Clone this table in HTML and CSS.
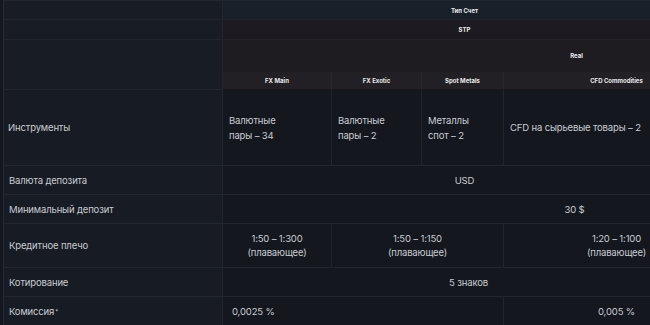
FILE: index.html
```html
<!DOCTYPE html>
<html lang="ru">
<head>
<meta charset="utf-8">
<link rel="stylesheet" href="styles.css">
</head>
<body>
<div class="table">
  <div class="cell head-left r1"></div>
  <div class="cell head-type span-all shift-l">Тип Счет</div>

  <div class="cell head-left r2"></div>
  <div class="cell head-stp span-all shift-l">STP</div>

  <div class="cell head-left r3"></div>
  <div class="cell head-real span-all shift-real">Real</div>

  <div class="cell sub c">FX Main</div>
  <div class="cell sub c">FX Exotic</div>
  <div class="cell sub c">Spot Metals</div>
  <div class="cell sub c last">CFD Commodities</div>

  <div class="cell label row-instr">Инструменты</div>
  <div class="cell data row-instr">Валютные<br>пары – 34</div>
  <div class="cell data row-instr">Валютные<br>пары – 2</div>
  <div class="cell data row-instr">Металлы<br>спот – 2</div>
  <div class="cell data row-instr instr-last">CFD на сырьевые товары – 2</div>

  <div class="cell label row-s">Валюта депозита</div>
  <div class="cell data row-s span-all shift-l c">USD</div>

  <div class="cell label row-s">Минимальный депозит</div>
  <div class="cell data row-s span-all shift-dep c">30 $</div>

  <div class="cell label row-lev">Кредитное плечо</div>
  <div class="cell data row-lev c stack">1:50 – 1:300<br>(плавающее)</div>
  <div class="cell data row-lev c span-2 stack">1:50 – 1:150<br>(плавающее)</div>
  <div class="cell data row-lev c last stack">1:20 – 1:100<br>(плавающее)</div>

  <div class="cell label row-s">Котирование</div>
  <div class="cell data row-s span-all shift-q c">5 знаков</div>

  <div class="cell label row-last">Комиссия<sup class="star">*</sup></div>
  <div class="cell data row-last span-3 pad-com">0,0025 %</div>
  <div class="cell data row-last c last">0,005 %</div>
</div>
</body>
</html>
```

FILE: styles.css
```css
html, body {
  margin: 0;
  padding: 0;
  background: #14171e;
  overflow: hidden;
  width: 650px;
  height: 325px;
}

body {
  font-family: Inter, "Noto Sans", "DejaVu Sans", sans-serif;
  color: #c9ccd3;
}

.table {
  display: grid;
  width: 647px;
  margin-left: 3px;
  border-left: 1px solid #262b35;
  border-top: 1px solid #20252e;
  grid-template-columns: 219px 109px 90px 82px 146px;
  grid-template-rows: 19px 20px 32px 18px 76px 29px 29px 44px 29px 30px;
}

.cell {
  box-sizing: border-box;
  display: flex;
  align-items: center;
  border-bottom: 1px solid #22262e;
  border-right: 1px solid #20242c;
  font-size: 9.5px;
  letter-spacing: -0.15px;
  line-height: 15px;
  padding: 0 5px;
  min-width: 0;
  white-space: nowrap;
}

.c { justify-content: center; text-align: center; }

.head-left {
  background: #181d25;
  border-color: #1f242d;
}
.head-left.r3 { grid-row: 3 / span 2; }

.span-all { grid-column: 2 / span 4; }
.span-2 { grid-column: span 2; }
.span-3 { grid-column: 2 / span 3; }

.head-type,
.head-stp,
.head-real,
.sub {
  font-size: 6px;
  letter-spacing: 0;
  font-weight: 700;
  color: #e9e9ec;
  justify-content: center;
}

.head-type { background: #1a202a; border-color: #1f242d; }
.head-stp { background: #1d1b21; border-color: #24222a; }
.head-real { background: #1e1b21; border-color: #1e1b21; }
.sub { background: #221f25; border-color: #16181e; border-right-color: #2a262d; }

.shift-l { padding: 0 0 0 56px; }
.shift-real { padding: 0 0 0 280px; }
.shift-dep { padding: 0 0 0 276px; }
.shift-q { padding: 0 0 0 64px; }

.last { padding: 0 0 0 79px; border-right: 0; }
.instr-last { border-right: 0; }
.span-all { border-right: 0; }

.label {
  background: #171b23;
  padding-left: 5px;
  border-right-color: #232830;
}

.data { background: #14171e; }

.row-instr { padding-left: 4px; }
.row-instr + .row-instr { padding-left: 6px; }

.stack { line-height: 14px; padding-top: 1px; }

.pad-com { padding-left: 9px; }

.star {
  font-size: 6px;
  line-height: 0;
  vertical-align: 5px;
  margin-left: 1px;
}
```
